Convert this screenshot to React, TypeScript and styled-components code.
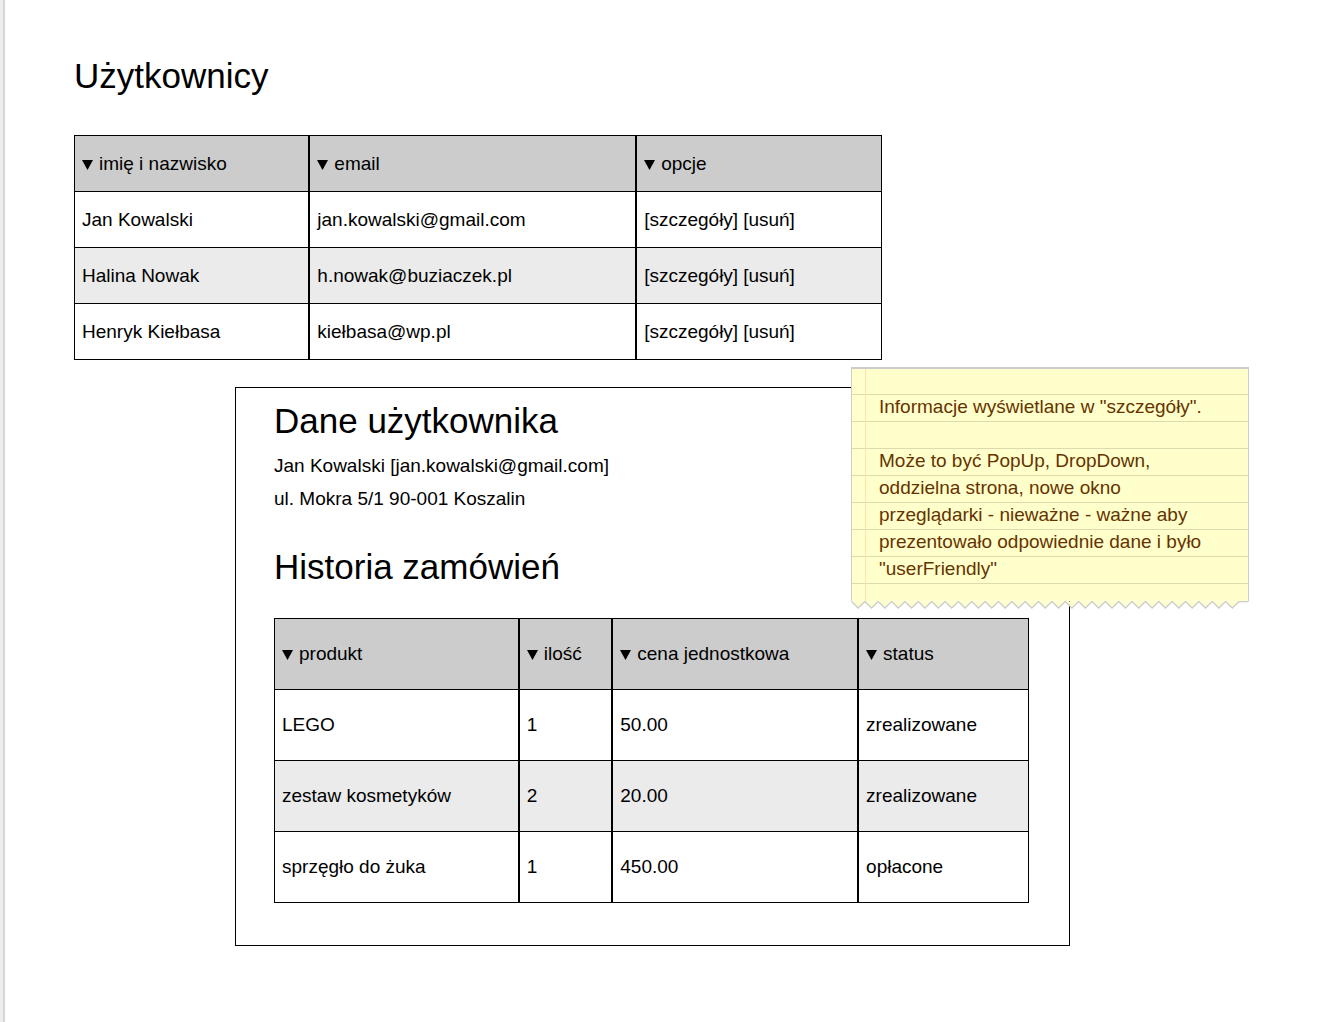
import React from "react";
import styled, { createGlobalStyle } from "styled-components";

const GlobalStyle = createGlobalStyle`
  *, *::before, *::after { box-sizing: border-box; }
  body {
    margin: 0;
    background: #ededed;
    color: #000;
    font: 19px/22px "Liberation Sans", Arial, Helvetica, sans-serif;
  }
`;

const Page = styled.main`
  min-height: 100vh;
  margin-left: 3px;
  padding: 56px 69px 72px;
  border-left: 2px solid #d6d6d6;
  background: #fff;
`;

const Heading = styled.h1`
  margin: 0;
  font-size: 35px;
  line-height: 40px;
  font-weight: 400;
`;

const UsersSection = styled.section`
  display: flex;
  flex-direction: column;
  gap: 39px;
  max-width: 808px;
`;

const Table = styled.table`
  width: 100%;
  border-collapse: collapse;
  table-layout: fixed;
`;

const Column = styled.col<{ $share: number }>`
  width: ${({ $share }) => $share}%;
`;

const Row = styled.tr<{ $tall?: boolean }>`
  height: ${({ $tall }) => ($tall ? 71 : 56)}px;

  tbody &:nth-child(even) {
    background: #ebebeb;
  }
`;

const HeadCell = styled.th`
  padding: 0 7px;
  border: 1px solid #000;
  border-inline-width: 2px;
  background: #ccc;
  font-weight: 400;
  text-align: left;

  &:first-child { border-left-width: 1px; }
  &:last-child { border-right-width: 1px; }
`;

const Cell = styled.td`
  padding: 0 7px;
  border: 1px solid #000;
  border-inline-width: 2px;

  &:first-child { border-left-width: 1px; }
  &:last-child { border-right-width: 1px; }
`;

const PlainButton = styled.button`
  padding: 0;
  border: 0;
  background: none;
  color: inherit;
  font: inherit;
  cursor: pointer;
`;

const SortButton = styled(PlainButton)`
  display: flex;
  align-items: center;
  gap: 6px;
  white-space: nowrap;
`;

const Arrow = styled.svg`
  width: 11px;
  height: 10px;
  margin-top: 2px;
`;

const Actions = styled.div`
  display: flex;
  gap: 5px;
`;

const DetailsArea = styled.div`
  position: relative;
  max-width: 835px;
  margin: 27px 0 0 161px;
`;

const DetailsPanel = styled.section`
  padding: 13px 40px 42px 38px;
  border: 1px solid #000;
`;

const Contact = styled.address`
  margin: 8px 0 32px;
  font-style: normal;
  line-height: 33px;
`;

const OrdersTable = styled.div`
  margin-top: 31px;
`;

const Note = styled.aside`
  position: absolute;
  top: -20px;
  right: -179px;
  width: 398px;
  color: #630;
  line-height: 27px;
`;

const NoteBody = styled.div`
  padding: 24px 27px 19px;
  border: 1px solid #ccc;
  border-top-width: 2px;
  border-bottom: 0;
  background:
    linear-gradient(#ffe0b0, #ffe0b0) 13px 0 / 1px 100% no-repeat,
    linear-gradient(#ffc 26px, #dedab0 26px) 0 -1px / 100% 27px;
`;

const NoteText = styled.p`
  margin: 0;

  & + & { margin-top: 27px; }
`;

const TornEdge = styled.svg`
  display: block;
  width: 100%;
  height: 8px;
`;

function SortHeader({ label }: { label: string }) {
  return (
    <HeadCell scope="col">
      <SortButton type="button">
        <Arrow viewBox="0 0 11 10" aria-hidden="true">
          <path d="M0 0h11L5.5 10z" />
        </Arrow>
        {label}
      </SortButton>
    </HeadCell>
  );
}

const users = [
  { name: "Jan Kowalski", email: "jan.kowalski@gmail.com" },
  { name: "Halina Nowak", email: "h.nowak@buziaczek.pl" },
  { name: "Henryk Kiełbasa", email: "kiełbasa@wp.pl" },
];

const orders = [
  ["LEGO", "1", "50.00", "zrealizowane"],
  ["zestaw kosmetyków", "2", "20.00", "zrealizowane"],
  ["sprzęgło do żuka", "1", "450.00", "opłacone"],
];

const TOOTH = 13.36;
const teeth = Array.from(
  { length: 29 },
  (_, i) => `L${(0.5 + (i + 0.5) * TOOTH).toFixed(2)} 7L${(0.5 + (i + 1) * TOOTH).toFixed(2)} 0.5`,
).join("");
const tornPath = `M0.5 0.5${teeth}H397.5`;

export default function App() {
  return (
    <>
      <GlobalStyle />
      <Page>
        <UsersSection>
          <Heading>Użytkownicy</Heading>
          <Table>
            <colgroup>
              {[29.1, 40.5, 30.4].map((share, i) => <Column key={i} $share={share} />)}
            </colgroup>
            <thead>
              <Row>
                {["imię i nazwisko", "email", "opcje"].map((label) => (
                  <SortHeader key={label} label={label} />
                ))}
              </Row>
            </thead>
            <tbody>
              {users.map((user) => (
                <Row key={user.email}>
                  <Cell>{user.name}</Cell>
                  <Cell>{user.email}</Cell>
                  <Cell>
                    <Actions>
                      <PlainButton type="button">[szczegóły]</PlainButton>
                      <PlainButton type="button">[usuń]</PlainButton>
                    </Actions>
                  </Cell>
                </Row>
              ))}
            </tbody>
          </Table>
        </UsersSection>

        <DetailsArea>
          <DetailsPanel>
            <Heading as="h2">Dane użytkownika</Heading>
            <Contact>
              <div>Jan Kowalski [jan.kowalski@gmail.com]</div>
              <div>ul. Mokra 5/1 90-001 Koszalin</div>
            </Contact>
            <Heading as="h2">Historia zamówień</Heading>
            <OrdersTable>
              <Table>
                <colgroup>
                  {[32.4, 12.4, 32.6, 22.6].map((share, i) => <Column key={i} $share={share} />)}
                </colgroup>
                <thead>
                  <Row $tall>
                    {["produkt", "ilość", "cena jednostkowa", "status"].map((label) => (
                      <SortHeader key={label} label={label} />
                    ))}
                  </Row>
                </thead>
                <tbody>
                  {orders.map((order) => (
                    <Row $tall key={order[0]}>
                      {order.map((value, i) => <Cell key={i}>{value}</Cell>)}
                    </Row>
                  ))}
                </tbody>
              </Table>
            </OrdersTable>
          </DetailsPanel>

          <Note>
            <NoteBody>
              <NoteText>Informacje wyświetlane w "szczegóły".</NoteText>
              <NoteText>
                Może to być PopUp, DropDown, oddzielna strona, nowe okno przeglądarki - nieważne -
                ważne aby prezentowało odpowiednie dane i było "userFriendly"
              </NoteText>
            </NoteBody>
            <TornEdge viewBox="0 0 398 8" preserveAspectRatio="none" aria-hidden="true">
              <path d={tornPath} fill="#ffc" stroke="#ccc" strokeWidth="1.3" />
            </TornEdge>
          </Note>
        </DetailsArea>
      </Page>
    </>
  );
}
